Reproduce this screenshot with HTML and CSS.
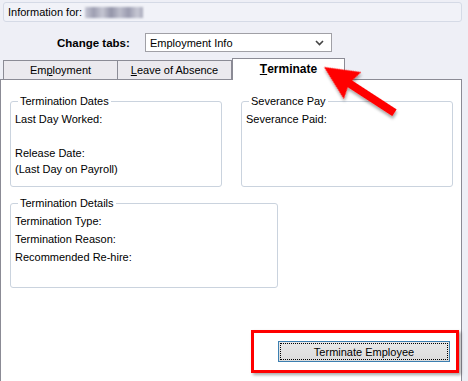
FILE: index.html
```html
<!DOCTYPE html>
<html lang="en">
<head>
  <meta charset="UTF-8" />
  <title>Terminate</title>
  <link rel="stylesheet" href="styles.css">
</head>
<body>
  <div class="window">
    <div class="info-bar">
      <span>Information for:</span>
      <span class="blurred-name"></span>
    </div>

    <div class="change-row">
      <label class="change-label">Change tabs:</label>
      <div class="select-box">
        <span>Employment Info</span>
        <svg width="9" height="6" viewBox="0 0 9 6"><path d="M1 1 L4.5 4.5 L8 1" fill="none" stroke="#444" stroke-width="1.6"/></svg>
      </div>
    </div>

    <div class="tabs">
      <div class="tab">Em<u>p</u>loyment</div>
      <div class="tab"><u>L</u>eave of Absence</div>
      <div class="tab active"><u>T</u>erminate</div>
    </div>

    <div class="panel">
      <div class="groups">
        <fieldset class="group">
          <legend>Termination Dates</legend>
          <div class="line gap-after">Last Day Worked:</div>
          <div class="line">Release Date:</div>
          <div class="line">(Last Day on Payroll)</div>
        </fieldset>

        <fieldset class="group">
          <legend>Severance Pay</legend>
          <div class="line">Severance Paid:</div>
        </fieldset>

        <fieldset class="group details">
          <legend>Termination Details</legend>
          <div class="row">Termination Type:</div>
          <div class="row">Termination Reason:</div>
          <div class="row">Recommended Re-hire:</div>
        </fieldset>
      </div>

      <div class="actions">
        <div class="highlight">
          <button type="button" class="btn">Terminate Employee</button>
        </div>
      </div>
    </div>
  </div>

  <!-- red callout arrow pointing at the Terminate tab -->
  <svg class="callout" width="468" height="381" viewBox="0 0 468 381">
    <defs>
      <filter id="shadow" x="-20%" y="-20%" width="140%" height="140%">
        <feDropShadow dx="2" dy="2" stdDeviation="1.5" flood-color="#000" flood-opacity="0.35"/>
      </filter>
    </defs>
    <g transform="translate(324 67) rotate(33)" filter="url(#shadow)">
      <polygon points="0,0 34,-16 31,-4 84,-4 84,4 31,4 34,16" fill="#f00"/>
    </g>
  </svg>
</body>
</html>
```

FILE: styles.css
```css
* {
  box-sizing: border-box;
  margin: 0;
  padding: 0;
}

html, body {
  overflow: hidden;
}

body {
  background-color: #eeeff6;
  color: #000;
  font-family: 'Liberation Sans', Arial, sans-serif;
  font-size: 11px;
  width: 468px;
  height: 381px;
}

.window {
  width: 462px;
}

.info-bar {
  display: flex;
  align-items: center;
  gap: 3px;
  margin: 2px 0 0 3px;
  height: 20px;
  padding-left: 4px;
  border: 1px solid #d5dae6;
  border-radius: 3px;
  background: #f1f2f8;
}

.blurred-name {
  display: inline-block;
  width: 58px;
  height: 11px;
  background: linear-gradient(90deg, #c8c9d6 0%, #9d9eb1 15%, #c6c7d3 30%, #9394a8 45%, #bdbecc 60%, #9a9baf 75%, #c7c8d4 90%, #a9aabb 100%);
  filter: blur(0.8px);
}

.change-row {
  display: flex;
  align-items: center;
  margin-top: 11px;
  padding-left: 57px;
  height: 19px;
}

.change-label {
  width: 88px;
  font-weight: bold;
  font-size: 11.5px;
}

.select-box {
  display: flex;
  align-items: center;
  justify-content: space-between;
  width: 187px;
  height: 19px;
  padding: 0 7px 0 4px;
  background: #fff;
  border: 1px solid #a0a0a6;
}

.tabs {
  display: flex;
  align-items: flex-end;
  margin-top: 5px;
  padding-left: 3px;
  height: 22px;
  position: relative;
  z-index: 1;
}

.tab {
  width: 115px;
  height: 19px;
  display: flex;
  align-items: center;
  justify-content: center;
  background: #ebe9ee;
  border: 1px solid #8b8b95;
  border-bottom: none;
}

.tab + .tab {
  margin-left: -1px;
}

.tab.active {
  width: 113px;
  height: 22px;
  margin-left: 0;
  margin-bottom: -1px;
  background: #fff;
  font-weight: bold;
  font-size: 12px;
  padding-bottom: 2px;
}

.panel {
  height: 320px;
  background: #fff;
  border: 1px solid #8b8b95;
}

.groups {
  display: grid;
  grid-template-columns: 212px 212px;
  column-gap: 19px;
  row-gap: 10px;
  padding: 15px 0 0 9px;
}

.group {
  height: 92px;
  padding: 3px 4px 0 4px;
  border: 1px solid #cad3de;
  border-radius: 3px;
}

.group legend {
  margin-left: 3px;
  padding: 0 2px;
  line-height: 13px;
}

.line {
  line-height: 16px;
}

.line.gap-after {
  margin-bottom: 18px;
}

.group.details {
  grid-column: 1 / span 2;
  width: 268px;
  height: 91px;
  padding-top: 2px;
}

.row {
  line-height: 18px;
}

.actions {
  display: flex;
  justify-content: flex-end;
  margin-top: 42px;
  padding-right: 2px;
}

.highlight {
  width: 208px;
  padding: 8px 5px 8px 24px;
  border: 3px solid #f00;
  box-shadow: 2px 2px 3px rgba(0, 0, 0, 0.35);
}

.btn {
  display: block;
  width: 172px;
  height: 21px;
  font-family: 'Liberation Sans', Arial, sans-serif;
  font-size: 11px;
  color: #000;
  background: linear-gradient(#e8e8e8, #dcdcdc);
  border: 1px solid #3c7fb1;
  outline: 1px dotted #000;
  outline-offset: -3px;
}

.callout {
  position: absolute;
  top: 0;
  left: 0;
  z-index: 10;
  pointer-events: none;
}
```
